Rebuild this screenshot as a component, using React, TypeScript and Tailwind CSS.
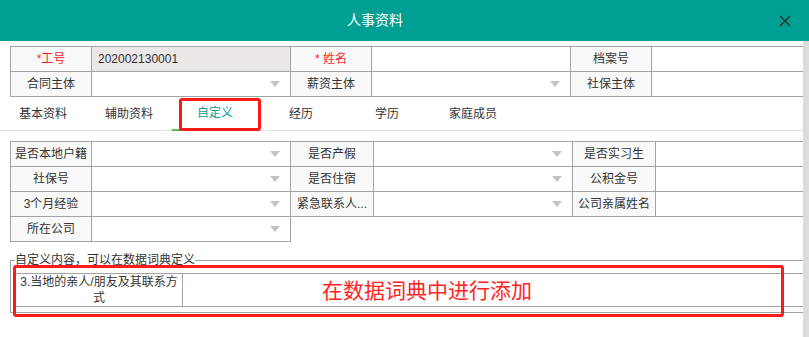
import React from 'react';

const font = { fontFamily: '"Liberation Sans", "Noto Sans CJK SC", sans-serif' };

function Label({ children, red }: { children: React.ReactNode; red?: boolean }) {
  return (
    <td className={`border border-[#a3a3a3] bg-[#f9f9f9] text-center px-1 ${red ? 'text-[#ff1f1f]' : 'text-[#333]'}`}>
      {children}
    </td>
  );
}

function Value({ select, children, gray }: { select?: boolean; children?: React.ReactNode; gray?: boolean }) {
  return (
    <td className={`border border-[#a3a3a3] px-[6px] ${gray ? 'bg-[#ebe8e7]' : 'bg-white'}`}>
      <div className="flex items-center justify-between">
        <span className="text-[#333]">{children}</span>
        {select && (
          <svg width="10" height="6" viewBox="0 0 10 6" className="mr-[4px]">
            <path d="M0 0 L10 0 L5 6 Z" fill="#c4c4c4" />
          </svg>
        )}
      </div>
    </td>
  );
}

const tabs = ['基本资料', '辅助资料', '自定义', '经历', '学历', '家庭成员'];

export default function App() {
  return (
    <div className="relative w-[809px] h-[337px] overflow-hidden bg-white text-[12px]" style={font}>
      {/* Header */}
      <div className="h-[41px] bg-[#009f93] flex items-center">
        <span className="pl-[347px] text-white text-[14px]">人事资料</span>
        <svg width="12" height="12" viewBox="0 0 12 12" className="ml-auto mr-[18px]">
          <path d="M1 1 L11 11 M11 1 L1 11" stroke="#2e3a3a" strokeWidth="1.6" />
        </svg>
      </div>

      <div className="flex h-[296px]">
        <div className="flex-1 min-w-0 overflow-hidden pt-[5px] pl-[10px]">
          {/* Top table */}
          <table className="table-fixed border-collapse w-[800px]">
            <colgroup>
              <col className="w-[81px]" />
              <col className="w-[199px]" />
              <col className="w-[81px]" />
              <col className="w-[199px]" />
              <col className="w-[81px]" />
              <col />
            </colgroup>
            <tbody>
              <tr className="h-[25px]">
                <Label red>*工号</Label>
                <Value gray>202002130001</Value>
                <Label red>* 姓名</Label>
                <Value />
                <Label>档案号</Label>
                <Value />
              </tr>
              <tr className="h-[25px]">
                <Label>合同主体</Label>
                <Value select />
                <Label>薪资主体</Label>
                <Value select />
                <Label>社保主体</Label>
                <Value />
              </tr>
            </tbody>
          </table>

          {/* Tabs */}
          <div className="-ml-[10px] flex h-[34px] border-b border-[#e2e2e2]">
            {tabs.map(t => (
              <div
                key={t}
                className={`w-[86px] flex items-center justify-center ${t === '自定义' ? 'text-[#0a9e94] border-b-2 border-[#5cb85c] -mb-px' : 'text-[#333]'}`}
              >
                {t}
              </div>
            ))}
          </div>

          {/* Custom table */}
          <table className="table-fixed border-collapse w-[800px] mt-[10px]">
            <colgroup>
              <col className="w-[81px]" />
              <col className="w-[199px]" />
              <col className="w-[83px]" />
              <col className="w-[199px]" />
              <col className="w-[83px]" />
              <col />
            </colgroup>
            <tbody>
              <tr className="h-[25px]">
                <Label>是否本地户籍</Label>
                <Value select />
                <Label>是否产假</Label>
                <Value select />
                <Label>是否实习生</Label>
                <Value />
              </tr>
              <tr className="h-[25px]">
                <Label>社保号</Label>
                <Value select />
                <Label>是否住宿</Label>
                <Value select />
                <Label>公积金号</Label>
                <Value />
              </tr>
              <tr className="h-[25px]">
                <Label>3个月经验</Label>
                <Value select />
                <Label>紧急联系人...</Label>
                <Value select />
                <Label>公司亲属姓名</Label>
                <Value />
              </tr>
              <tr className="h-[25px]">
                <Label>所在公司</Label>
                <Value select />
                <td colSpan={4} />
              </tr>
            </tbody>
          </table>

          {/* Fieldset */}
          <fieldset className="mt-[10px] w-[800px] border border-[#a3a3a3] pl-[4px] pr-0 pb-[5px]">
            <legend className="px-0 leading-[16px] text-[#333]">自定义内容，可以在数据词典定义</legend>
            <table className="table-fixed border-collapse w-full mt-[5px]">
              <colgroup>
                <col className="w-[167px]" />
                <col />
              </colgroup>
              <tbody>
                <tr className="h-[33px]">
                  <td className="border border-[#a3a3a3] text-center text-[#333] leading-[16px] px-[4px]">
                    3.当地的亲人/朋友及其联系方式
                  </td>
                  <td className="border border-[#a3a3a3]" />
                </tr>
              </tbody>
            </table>
          </fieldset>
        </div>
        {/* Scrollbar */}
        <div className="w-[6px] shrink-0 bg-[#dcdcdc]" />
      </div>

      {/* Annotations */}
      <div className="absolute left-[179px] top-[98px] w-[82px] h-[33px] border-[3px] border-[#ff1a1a] rounded-[3px]" />
      <div className="absolute left-[13px] top-[265px] w-[771px] h-[52px] border-[3px] border-[#ff1a1a] rounded-[3px]" />
      <div
        className="absolute left-[322px] top-[275px] text-[#ff2424] text-[21px] leading-[28px]"
        style={{ fontFamily: '"Noto Sans CJK SC", sans-serif' }}
      >
        在数据词典中进行添加
      </div>
    </div>
  );
}
